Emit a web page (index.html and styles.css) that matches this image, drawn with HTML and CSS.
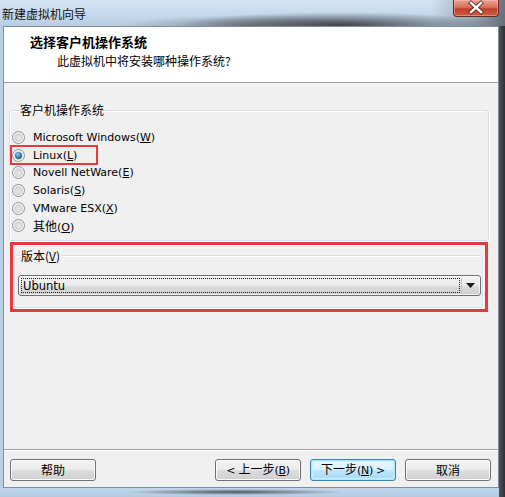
FILE: index.html
```html
<!DOCTYPE html>
<html lang="zh-CN">
<head>
<meta charset="utf-8">
<title>新建虚拟机向导</title>
<link rel="stylesheet" href="styles.css">
</head>
<body>
<div class="window">
  <div class="titlebar">
    <span class="title">新建虚拟机向导</span>
    <span class="close">
      <svg width="46" height="17" viewBox="0 0 46 17">
        <path d="M18 4 L28 13 M28 4 L18 13" stroke="#5a2a22" stroke-width="4.2" stroke-linecap="square"/>
        <path d="M18 4 L28 13 M28 4 L18 13" stroke="#ffffff" stroke-width="2.4" stroke-linecap="square"/>
      </svg>
    </span>
  </div>
  <div class="client">
    <div class="header">
      <div class="h-title">选择客户机操作系统</div>
      <div class="h-sub">此虚拟机中将安装哪种操作系统?</div>
    </div>
    <div class="content">
      <fieldset class="group os">
        <legend>客户机操作系统</legend>
        <div class="radios">
          <label class="row"><span class="radio"></span><span>Microsoft Windows(<u>W</u>)</span></label>
          <label class="row marked"><span class="radio checked"></span><span>Linux(<u>L</u>)</span><span class="annot"></span></label>
          <label class="row"><span class="radio"></span><span>Novell NetWare(<u>E</u>)</span></label>
          <label class="row"><span class="radio"></span><span>Solaris(<u>S</u>)</span></label>
          <label class="row"><span class="radio"></span><span>VMware ESX(<u>X</u>)</span></label>
          <label class="row"><span class="radio"></span><span><span class="cjk">其他</span>(<u>O</u>)</span></label>
        </div>
      </fieldset>
      <div class="mark">
        <fieldset class="group ver">
          <legend><span class="cjk">版本</span>(<u>V</u>)</legend>
          <div class="combo">
            <span class="combo-text"><span class="focus">Ubuntu</span></span>
            <span class="combo-btn">
              <svg width="9" height="5" viewBox="0 0 9 5"><path d="M0 0 H9 L4.5 5 Z" fill="#1a1a1a"/></svg>
            </span>
          </div>
        </fieldset>
      </div>
    </div>
    <div class="footer">
      <button class="btn cjk">帮助</button>
      <span class="spacer"></span>
      <button class="btn">&lt; <span class="cjk">上一步</span>(<u>B</u>)</button>
      <button class="btn default"><span class="cjk">下一步</span>(<u>N</u>) &gt;</button>
      <button class="btn cjk">取消</button>
    </div>
  </div>
  <div class="frame-bottom"></div>
</div>
</body>
</html>
```
FILE: styles.css
```css
* { box-sizing: border-box; }
html, body { margin: 0; padding: 0; }
body {
  width: 505px;
  height: 497px;
  overflow: hidden;
  font-family: "DejaVu Sans", "Noto Sans CJK SC", sans-serif;
  font-size: 11px;
  color: #000;
}
.cjk { font-family: "Noto Sans CJK SC", sans-serif; font-size: 12px; }
u { text-decoration: underline; text-underline-offset: 1px; }

.window {
  width: 505px;
  height: 497px;
  display: flex;
  flex-direction: column;
  background:
    linear-gradient(to right, #b9cfe4 0, #b9cfe4 3px, transparent 3px, transparent 499px, #4d5256 499px, #2e3236 505px),
    linear-gradient(to bottom, #c9dbee, #a9c1d9);
}

.titlebar {
  height: 26px;
  display: flex;
  align-items: flex-start;
  padding-left: 2px;
  background:
    radial-gradient(ellipse 160px 13px at 340px 25px, rgba(60,64,68,0.95), rgba(60,64,68,0) 100%),
    radial-gradient(ellipse 130px 11px at 250px 26px, rgba(90,95,100,0.6), rgba(90,95,100,0) 100%),
    linear-gradient(to right, rgba(255,255,255,0) 430px, rgba(120,130,140,0.5) 470px, rgba(80,86,92,0.8) 505px),
    linear-gradient(to bottom, #d4e4f4 0, #c4d8ec 60%, #b8cde2 100%);
}
.title {
  font-family: "Noto Sans CJK SC", sans-serif;
  font-size: 12px;
  line-height: 16px;
  margin-top: 6px;
  color: #111;
}
.close {
  margin-left: auto;
  margin-right: 6px;
  width: 46px;
  height: 17px;
  display: block;
  border: 1px solid #6b2a22;
  border-top: none;
  border-radius: 0 0 4px 4px;
  background: linear-gradient(to bottom, #e8a493 0, #d7705c 45%, #c0402a 55%, #d25a40 100%);
  box-shadow: inset 0 0 0 1px rgba(255,200,190,0.45);
  overflow: hidden;
}
.close svg { display: block; margin: -1px 0 0 -1px; }

.client {
  width: 496px;
  height: 462px;
  margin-left: 3px;
  border: 1px solid #7f8d9b;
  display: flex;
  flex-direction: column;
  background: #f0f0f0;
}

.header {
  height: 56px;
  background: #fff;
  border-bottom: 1px solid #a0a0a0;
  padding-top: 7px;
}
.h-title {
  font-family: "Noto Sans CJK SC", sans-serif;
  font-weight: bold;
  font-size: 13px;
  line-height: 16px;
  padding-left: 26px;
}
.h-sub {
  font-family: "Noto Sans CJK SC", sans-serif;
  font-size: 12px;
  line-height: 16px;
  margin-top: 3px;
  padding-left: 53px;
}

.content {
  flex: 1;
  padding-top: 20px;
}

.group {
  border: 1px solid #d5dfe5;
  border-radius: 3px;
  box-shadow: inset 1px 1px 0 #fff, 1px 1px 0 #fff;
  margin: 0;
  padding: 0;
  min-width: 0;
}
.group legend {
  font-family: "Noto Sans CJK SC", sans-serif;
  font-size: 12px;
  line-height: 14px;
  padding: 0 1px;
  margin-left: 7px;
}

.os {
  margin-left: 5px;
  width: 480px;
  padding: 12px 2px 5px 2px;
}
.radios { display: flex; flex-direction: column; }
.row {
  position: relative;
  display: flex;
  align-items: center;
  height: 17.6px;
  gap: 8px;
  white-space: nowrap;
  letter-spacing: 0;
}
.radio {
  width: 13px;
  height: 13px;
  flex: none;
  border-radius: 50%;
  border: 1px solid #8f9295;
  background: radial-gradient(circle at 50% 55%, #e9e9e9 0, #d2d4d6 45%, #f6f6f6 100%);
  box-shadow: inset 0 0 0 1px #f8f8f8;
  position: relative;
}
.radio.checked::after {
  content: "";
  position: absolute;
  left: 2px;
  top: 2px;
  width: 7px;
  height: 7px;
  border-radius: 50%;
  background: radial-gradient(circle at 40% 35%, #9fd4f5 0, #3b8bc8 40%, #0f3f6f 100%);
}
.annot {
  position: absolute;
  left: -2px;
  top: -2px;
  width: 88px;
  height: 20px;
  border: 2.5px solid #e8383d;
  pointer-events: none;
}

.mark {
  margin: 1px 0 0 6px;
  width: 478px;
  border: 3px solid #e8383d;
  padding: 4px 2px 1px 1px;
}
.ver {
  padding: 12px 1px 11px 3px;
}
.ver legend { margin-left: 2px; }

.combo {
  height: 21px;
  display: flex;
  border: 1px solid #707070;
  border-radius: 3px;
  background: linear-gradient(to bottom, #f2f2f2 0, #ebebeb 50%, #dddddd 51%, #cfcfcf 100%);
  box-shadow: inset 0 0 0 1px rgba(255,255,255,0.7);
  padding: 2px;
}
.combo-text {
  flex: 1;
  display: flex;
}
.focus {
  flex: 1;
  border: 1px dotted #222;
  line-height: 15px;
  padding-left: 1px;
  font-size: 11.5px;
}
.combo-btn {
  width: 17px;
  display: flex;
  align-items: center;
  justify-content: center;
  border-left: 1px solid #bfbfbf;
  margin-left: 1px;
}

.footer {
  height: 38px;
  border-top: 1px solid #a0a0a0;
  box-shadow: inset 0 1px 0 #fff;
  display: flex;
  align-items: flex-start;
  gap: 9px;
  padding: 9px 7px 6px 6px;
}
.spacer { flex: 1; }
.btn {
  width: 86px;
  height: 22px;
  margin: 0;
  padding: 0;
  border: 1px solid #707070;
  border-radius: 3px;
  background: linear-gradient(to bottom, #f2f2f2 0, #ebebeb 50%, #dddddd 51%, #cfcfcf 100%);
  box-shadow: inset 0 0 0 1px #fcfcfc;
  font-family: "DejaVu Sans", "Noto Sans CJK SC", sans-serif;
  font-size: 11px;
  line-height: 18px;
  color: #000;
  white-space: nowrap;
  letter-spacing: -0.3px;
}
.btn.cjk { font-family: "Noto Sans CJK SC", sans-serif; font-size: 12px; letter-spacing: 0; }
.btn .cjk { font-size: 12px; letter-spacing: 0; }
.btn.default {
  border-color: #3c7fb1;
  background: linear-gradient(to bottom, #eaf6fd 0, #d9f0fc 50%, #bee6fd 51%, #a7d9f5 100%);
  box-shadow: inset 0 0 0 1px #48d8fb33, inset 0 0 0 2px #c7eefc;
}

.frame-bottom {
  flex: 1;
  background:
    radial-gradient(ellipse 110px 3px at 235px 4px, rgba(60,64,68,0.85), rgba(60,64,68,0) 100%),
    linear-gradient(to bottom, #c3d7eb, #b3cae0);
  margin-right: 6px;
}
```
